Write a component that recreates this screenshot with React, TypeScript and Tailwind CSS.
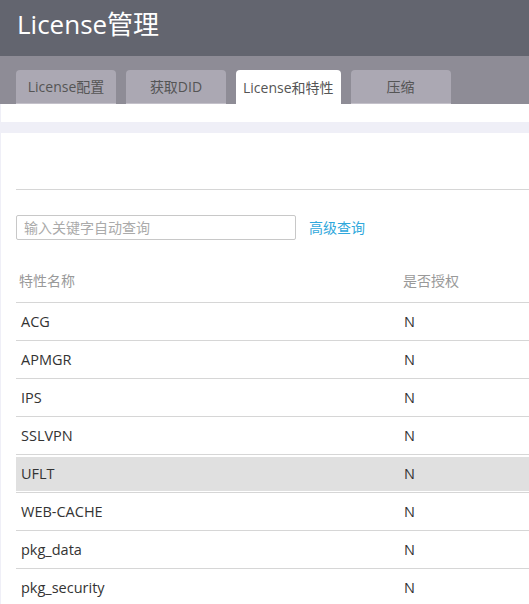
const font = '"Open Sans", "Noto Sans CJK SC", sans-serif';

const tabs = ['License配置', '获取DID', 'License和特性', '压缩'];
const activeTab = 2;

const features = [
  { name: 'ACG', licensed: 'N' },
  { name: 'APMGR', licensed: 'N' },
  { name: 'IPS', licensed: 'N' },
  { name: 'SSLVPN', licensed: 'N' },
  { name: 'UFLT', licensed: 'N', hover: true },
  { name: 'WEB-CACHE', licensed: 'N' },
  { name: 'pkg_data', licensed: 'N' },
  { name: 'pkg_security', licensed: 'N' },
];

export default function App() {
  return (
    <div className="min-h-screen w-[529px] overflow-hidden bg-white" style={{ fontFamily: font }}>
      {/* page title */}
      <div className="flex h-[56px] items-center bg-[#63656f] px-[17px] pb-[7px] text-[26px] text-white">
        License管理
      </div>

      {/* tabs */}
      <div className="flex h-[48px] items-end gap-[10px] bg-[#8e8c96] pl-4">
        {tabs.map((t, i) => (
          <div
            key={t}
            className={`flex h-[34px] min-w-[100px] items-center justify-center rounded-t-[4px] px-[7px] text-[14px] text-[#555] ${
              i === activeTab ? 'bg-white' : 'border-b border-[#c4c1ca] bg-[#aba8b3]'
            }`}
          >
            {t}
          </div>
        ))}
      </div>

      <div className="border-l border-[#efeff7]">
        <div className="h-[18px] bg-white" />
        <div className="h-[11px] bg-[#efeff7]" />

        <div className="pl-[15px]">
          <div className="h-[56px]" />
          <div className="border-t border-[#d6d6d6]" />

          {/* search */}
          <div className="mt-[25px] flex items-center">
            <input
              type="text"
              placeholder="输入关键字自动查询"
              className="h-[25px] w-[280px] rounded-[2px] border border-[#c8c8c8] px-[7px] text-[14px] text-[#333] placeholder-[#aaa] outline-none"
            />
            <a className="ml-[13px] cursor-pointer text-[14px] text-[#2fa8dc]">高级查询</a>
          </div>

          {/* table */}
          <div className="mt-[22px]">
            <div className="flex h-[40px] items-center pb-[4px] text-[14px] text-[#999]">
              <div className="w-[383px] pl-[3px]">特性名称</div>
              <div className="pl-[4px]">是否授权</div>
            </div>
            {features.map((f) => (
              <div key={f.name} className="border-t border-[#d6d6d6]">
                <div className="flex h-[37px] flex-col">
                  <div
                    className={`flex items-center text-[14.5px] text-[#333] ${
                      f.hover ? 'mt-[2px] h-[34px] bg-[#e0e0e0]' : 'h-[37px]'
                    }`}
                  >
                    <div className="w-[383px] pl-[5px]">{f.name}</div>
                    <div className="pl-[5px]">{f.licensed}</div>
                  </div>
                </div>
              </div>
            ))}
          </div>
        </div>
      </div>
    </div>
  );
}
